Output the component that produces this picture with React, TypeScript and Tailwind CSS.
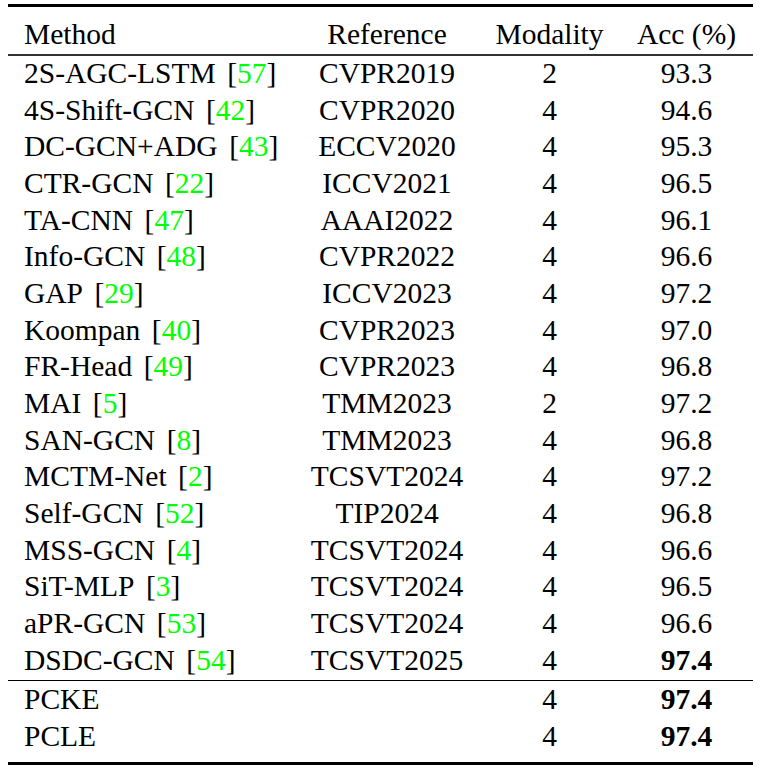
import React from "react";

type Row = { name: string; cite?: string; ref: string; mod: string; acc: string; bold?: boolean };

const rows: Row[] = [
  { name: "2S-AGC-LSTM", cite: "57", ref: "CVPR2019", mod: "2", acc: "93.3" },
  { name: "4S-Shift-GCN", cite: "42", ref: "CVPR2020", mod: "4", acc: "94.6" },
  { name: "DC-GCN+ADG", cite: "43", ref: "ECCV2020", mod: "4", acc: "95.3" },
  { name: "CTR-GCN", cite: "22", ref: "ICCV2021", mod: "4", acc: "96.5" },
  { name: "TA-CNN", cite: "47", ref: "AAAI2022", mod: "4", acc: "96.1" },
  { name: "Info-GCN", cite: "48", ref: "CVPR2022", mod: "4", acc: "96.6" },
  { name: "GAP", cite: "29", ref: "ICCV2023", mod: "4", acc: "97.2" },
  { name: "Koompan", cite: "40", ref: "CVPR2023", mod: "4", acc: "97.0" },
  { name: "FR-Head", cite: "49", ref: "CVPR2023", mod: "4", acc: "96.8" },
  { name: "MAI", cite: "5", ref: "TMM2023", mod: "2", acc: "97.2" },
  { name: "SAN-GCN", cite: "8", ref: "TMM2023", mod: "4", acc: "96.8" },
  { name: "MCTM-Net", cite: "2", ref: "TCSVT2024", mod: "4", acc: "97.2" },
  { name: "Self-GCN", cite: "52", ref: "TIP2024", mod: "4", acc: "96.8" },
  { name: "MSS-GCN", cite: "4", ref: "TCSVT2024", mod: "4", acc: "96.6" },
  { name: "SiT-MLP", cite: "3", ref: "TCSVT2024", mod: "4", acc: "96.5" },
  { name: "aPR-GCN", cite: "53", ref: "TCSVT2024", mod: "4", acc: "96.6" },
  { name: "DSDC-GCN", cite: "54", ref: "TCSVT2025", mod: "4", acc: "97.4", bold: true },
];

const ours: Row[] = [
  { name: "PCKE", ref: "", mod: "4", acc: "97.4", bold: true },
  { name: "PCLE", ref: "", mod: "4", acc: "97.4", bold: true },
];

function TableRow({ r, h }: { r: Row; h: string }) {
  return (
    <div className={`grid grid-cols-[287px_184px_141px_133px] items-center ${h}`}>
      <div className="pl-[16px] whitespace-nowrap">
        {r.name}
        {r.cite && (
          <>
            <span className="inline-block w-[11.5px]" />[<span className="text-[#00ff00]">{r.cite}</span>]
          </>
        )}
      </div>
      <div className="text-center whitespace-nowrap">{r.ref}</div>
      <div className="text-center">{r.mod}</div>
      <div className={`text-center ${r.bold ? "font-bold" : ""}`}>{r.acc}</div>
    </div>
  );
}

export default function App() {
  return (
    <div
      className="w-[762px] h-[772px] bg-white text-black overflow-hidden"
      style={{ fontFamily: '"Liberation Serif", "Times New Roman", serif' }}
    >
      <div className="ml-[8px] w-[745px] pt-[4px] text-[29.5px] leading-[36.66px]">
        <div className="h-[3px] bg-black" />
        <div className="grid grid-cols-[287px_184px_141px_133px] h-[47px] pt-[9px]">
          <div className="pl-[16px]">Method</div>
          <div className="text-center">Reference</div>
          <div className="text-center">Modality</div>
          <div className="text-center">Acc (%)</div>
        </div>
        <div className="h-[2px] bg-[#333]" />
        <div className="-mt-[1px]">
          {rows.map((r, i) => (
            <TableRow key={i} r={r} h="h-[36.66px]" />
          ))}
        </div>
        <div className="mt-[1.5px] h-[1.5px] bg-black" />
        <div>
          {ours.map((r, i) => (
            <TableRow key={i} r={r} h="h-[37px]" />
          ))}
        </div>
        <div className="mt-[6.5px] h-[3px] bg-black" />
      </div>
    </div>
  );
}
